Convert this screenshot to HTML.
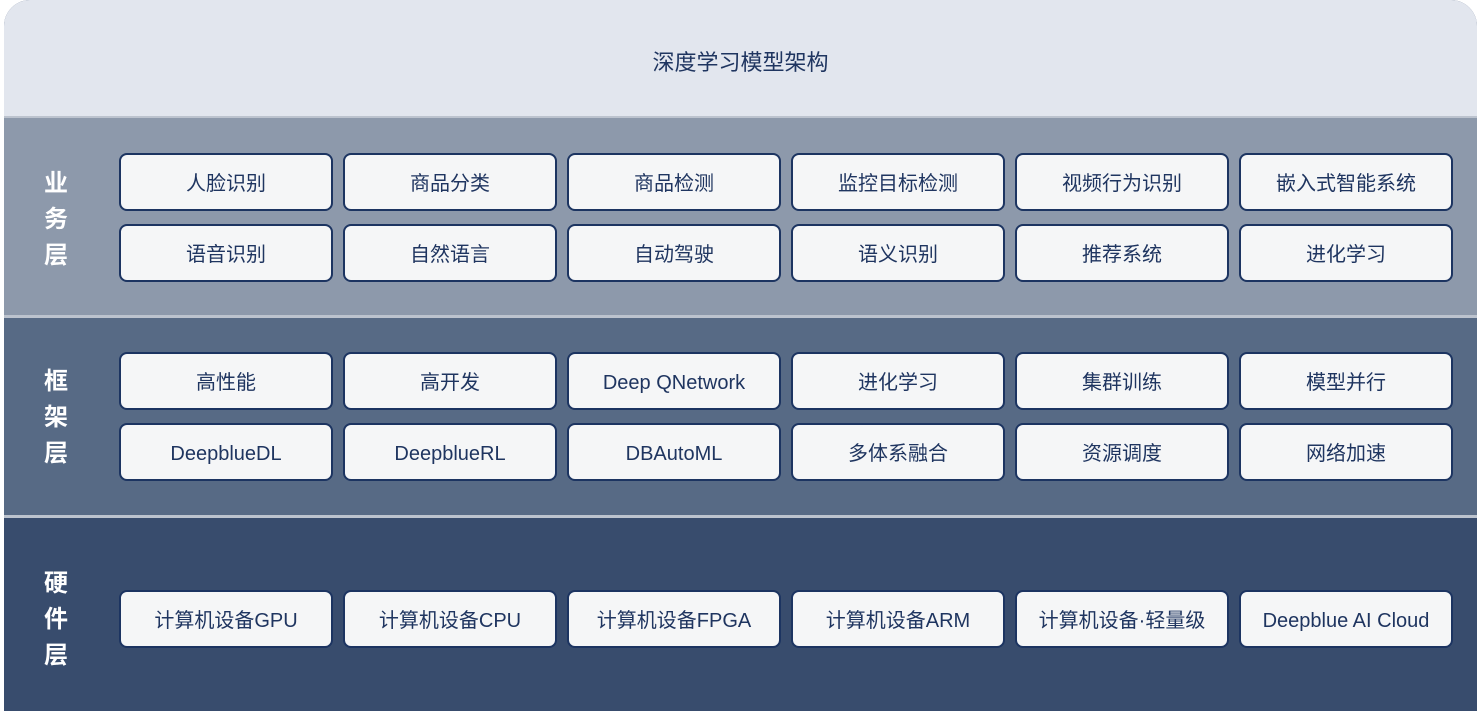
<!DOCTYPE html>
<html><head><meta charset="utf-8"><style>
html,body{margin:0;padding:0;background:#fff;}
body{width:1481px;height:715px;position:relative;overflow:hidden;font-family:"Liberation Sans","Noto Sans CJK SC",sans-serif;}
.wrap{position:absolute;left:4px;top:0;width:1473px;height:711px;border-radius:26px 26px 0 0;overflow:hidden;background:#384c6d;}
.top{position:absolute;left:0;top:0;width:100%;height:116px;background:#e2e6ee;color:#1f3560;font-size:22px;text-align:center;line-height:126px;}
.band{position:absolute;left:0;width:100%;}
.b1{top:118px;height:197px;background:#8d99ab;}
.b2{top:318px;height:197px;background:#576a85;}
.b3{top:518px;height:193px;background:#384c6d;}
.sep{position:absolute;left:0;width:100%;height:3px;background:#bcc3ce;}
.lab{position:absolute;left:36px;width:32px;color:#fff;font-size:24px;font-weight:bold;line-height:36px;text-align:center;}
.box{position:absolute;width:210px;height:54px;border:2px solid #1c3461;border-radius:8px;background:#f5f6f7;color:#1f3560;font-size:20px;line-height:59px;text-align:center;white-space:nowrap;}
</style></head><body>
<div class="wrap">
<div class="top">深度学习模型架构</div>
<div class="sep" style="top:116px"></div>
<div class="band b1"></div>
<div class="sep" style="top:315px"></div>
<div class="band b2"></div>
<div class="sep" style="top:515px"></div>
<div class="band b3"></div>
<div class="lab" style="top:166px">业<br>务<br>层</div>
<div class="lab" style="top:364px">框<br>架<br>层</div>
<div class="lab" style="top:566px">硬<br>件<br>层</div>
</div>
<div class="box" style="left:119px;top:153px">人脸识别</div>
<div class="box" style="left:343px;top:153px">商品分类</div>
<div class="box" style="left:567px;top:153px">商品检测</div>
<div class="box" style="left:791px;top:153px">监控目标检测</div>
<div class="box" style="left:1015px;top:153px">视频行为识别</div>
<div class="box" style="left:1239px;top:153px">嵌入式智能系统</div>
<div class="box" style="left:119px;top:224px">语音识别</div>
<div class="box" style="left:343px;top:224px">自然语言</div>
<div class="box" style="left:567px;top:224px">自动驾驶</div>
<div class="box" style="left:791px;top:224px">语义识别</div>
<div class="box" style="left:1015px;top:224px">推荐系统</div>
<div class="box" style="left:1239px;top:224px">进化学习</div>
<div class="box" style="left:119px;top:352px">高性能</div>
<div class="box" style="left:343px;top:352px">高开发</div>
<div class="box" style="left:567px;top:352px">Deep QNetwork</div>
<div class="box" style="left:791px;top:352px">进化学习</div>
<div class="box" style="left:1015px;top:352px">集群训练</div>
<div class="box" style="left:1239px;top:352px">模型并行</div>
<div class="box" style="left:119px;top:423px">DeepblueDL</div>
<div class="box" style="left:343px;top:423px">DeepblueRL</div>
<div class="box" style="left:567px;top:423px">DBAutoML</div>
<div class="box" style="left:791px;top:423px">多体系融合</div>
<div class="box" style="left:1015px;top:423px">资源调度</div>
<div class="box" style="left:1239px;top:423px">网络加速</div>
<div class="box" style="left:119px;top:590px">计算机设备GPU</div>
<div class="box" style="left:343px;top:590px">计算机设备CPU</div>
<div class="box" style="left:567px;top:590px">计算机设备FPGA</div>
<div class="box" style="left:791px;top:590px">计算机设备ARM</div>
<div class="box" style="left:1015px;top:590px">计算机设备·轻量级</div>
<div class="box" style="left:1239px;top:590px">Deepblue AI Cloud</div>
</body></html>
